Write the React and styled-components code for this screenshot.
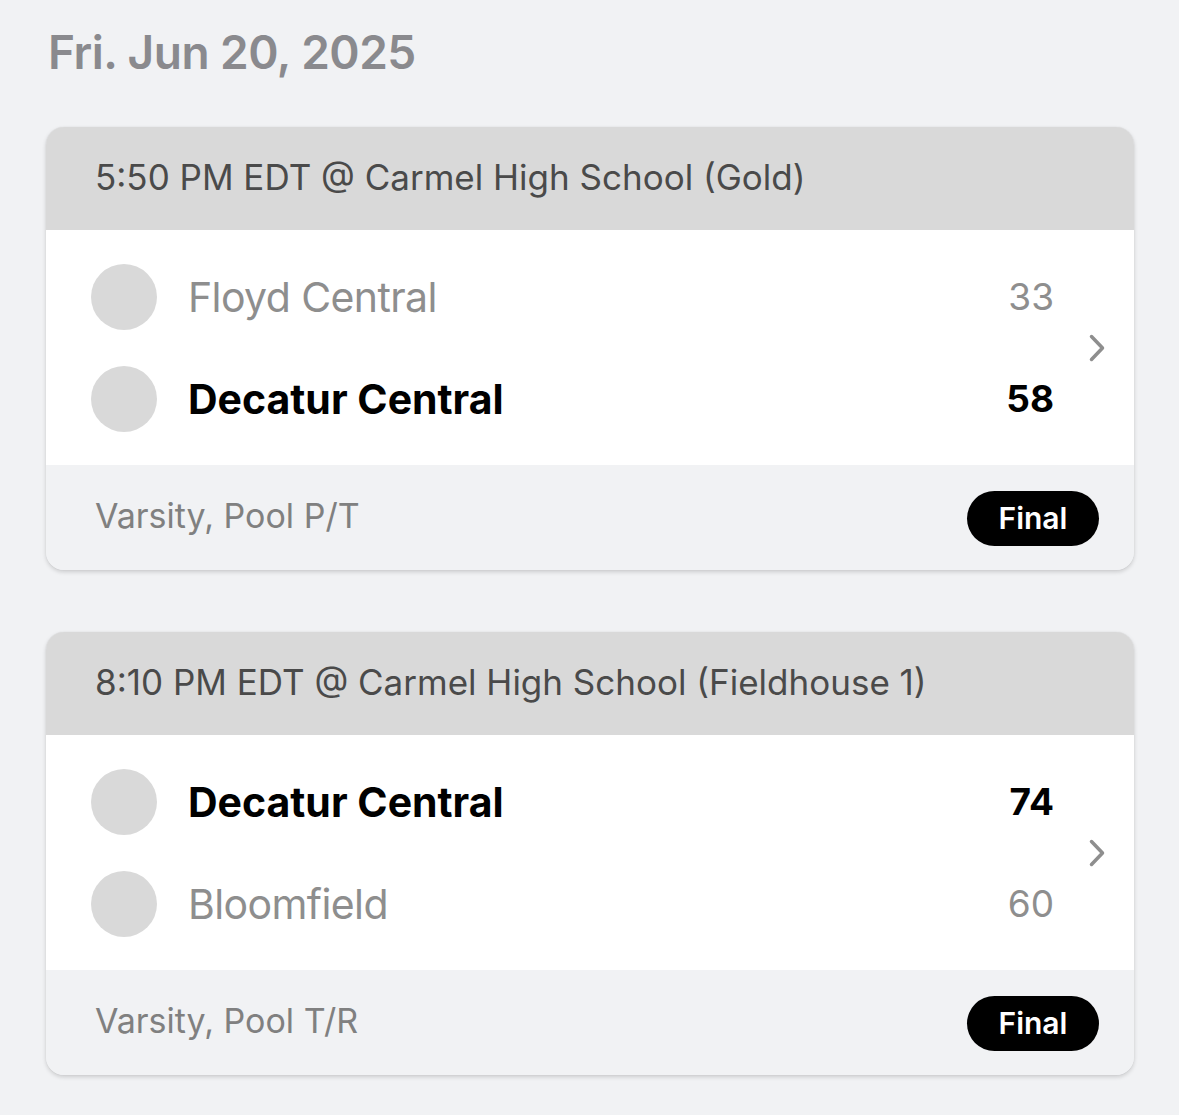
import React from "react";
import styled, { createGlobalStyle } from "styled-components";

const GlobalStyle = createGlobalStyle`
	body {
		margin: 0;
		background: #f1f2f4;
		font-family: "Inter", "Liberation Sans", sans-serif;
	}
`;

const games = [
	{
		time: "5:50 PM EDT @ Carmel High School (Gold)",
		teams: [
			{ name: "Floyd Central", score: 33, won: false },
			{ name: "Decatur Central", score: 58, won: true },
		],
		label: "Varsity, Pool P/T",
		status: "Final",
	},
	{
		time: "8:10 PM EDT @ Carmel High School (Fieldhouse 1)",
		teams: [
			{ name: "Decatur Central", score: 74, won: true },
			{ name: "Bloomfield", score: 60, won: false },
		],
		label: "Varsity, Pool T/R",
		status: "Final",
	},
];

function Chevron() {
	return (
		<svg width="18" height="28" viewBox="0 0 18 28" fill="none">
			<path
				d="M3.5 2.5 L14.5 14 L3.5 25.5"
				stroke="#8e8e8e"
				strokeWidth="3.5"
				strokeLinecap="round"
				strokeLinejoin="round"
			/>
		</svg>
	);
}

function App() {
	return (
		<Wrapper>
			<GlobalStyle />
			<DateTitle>Fri. Jun 20, 2025</DateTitle>
			<List>
				{games.map((game, key) => (
					<Card key={key}>
						<CardHeader>{game.time}</CardHeader>
						<CardBody>
							<Teams>
								{game.teams.map((team, i) => (
									<TeamRow key={i}>
										<Logo />
										<TeamName $won={team.won}>{team.name}</TeamName>
										<Score $won={team.won}>{team.score}</Score>
									</TeamRow>
								))}
							</Teams>
							<ChevronBox>
								<Chevron />
							</ChevronBox>
						</CardBody>
						<CardFooter>
							<FooterLabel>{game.label}</FooterLabel>
							<StatusPill>{game.status}</StatusPill>
						</CardFooter>
					</Card>
				))}
			</List>
		</Wrapper>
	);
}

const Wrapper = styled.div`
	padding: 24px 45px 40px 46px;
`;

const DateTitle = styled.h1`
	margin: 0 0 0 2px;
	font-size: 46px;
	line-height: 56px;
	font-weight: 600;
	color: #8a8a8e;
	letter-spacing: -0.5px;
`;

const List = styled.div`
	margin-top: 47px;
	display: flex;
	flex-direction: column;
	gap: 62px;
`;

const Card = styled.div`
	border-radius: 18px;
	overflow: hidden;
	background: #f1f2f4;
	box-shadow: 0 2px 4px rgba(0, 0, 0, 0.16), 0 0 1px rgba(0, 0, 0, 0.12);
`;

const CardHeader = styled.div`
	height: 103px;
	box-sizing: border-box;
	display: flex;
	align-items: center;
	padding: 0 0 4px 49px;
	background: #d9d9d9;
	font-size: 35px;
	color: #4a4a4a;
`;

const CardBody = styled.div`
	height: 235px;
	background: #ffffff;
	display: flex;
	align-items: center;
	padding: 0 28px 0 45px;
`;

const Teams = styled.div`
	flex: 1;
	display: flex;
	flex-direction: column;
	gap: 36px;
`;

const TeamRow = styled.div`
	display: flex;
	align-items: center;
	height: 66px;
`;

const Logo = styled.div`
	width: 66px;
	height: 66px;
	border-radius: 50%;
	background: #d9d9d9;
	flex-shrink: 0;
`;

const TeamName = styled.span`
	margin-left: 31px;
	flex: 1;
	font-size: 41px;
	font-weight: ${(p) => (p.$won ? 700 : 400)};
	color: ${(p) => (p.$won ? "#000000" : "#8e8e8e")};
	letter-spacing: ${(p) => (p.$won ? "0" : "-0.6px")};
`;

const Score = styled.span`
	font-size: 37px;
	font-weight: ${(p) => (p.$won ? 700 : 400)};
	color: ${(p) => (p.$won ? "#000000" : "#8e8e8e")};
	margin-right: 34px;
`;

const ChevronBox = styled.div`
	display: flex;
	align-items: center;
	width: 18px;
`;

const CardFooter = styled.div`
	height: 105px;
	display: flex;
	align-items: center;
	justify-content: space-between;
	padding: 0 35px 0 49px;
	background: #f1f2f4;
`;

const FooterLabel = styled.span`
	font-size: 34px;
	color: #808080;
	margin-bottom: 5px;
`;

const StatusPill = styled.span`
	display: inline-flex;
	align-items: center;
	justify-content: center;
	width: 132px;
	height: 55px;
	margin-top: 1px;
	border-radius: 28px;
	background: #000000;
	color: #ffffff;
	font-size: 30px;
	font-weight: 600;
`;

export default App;
